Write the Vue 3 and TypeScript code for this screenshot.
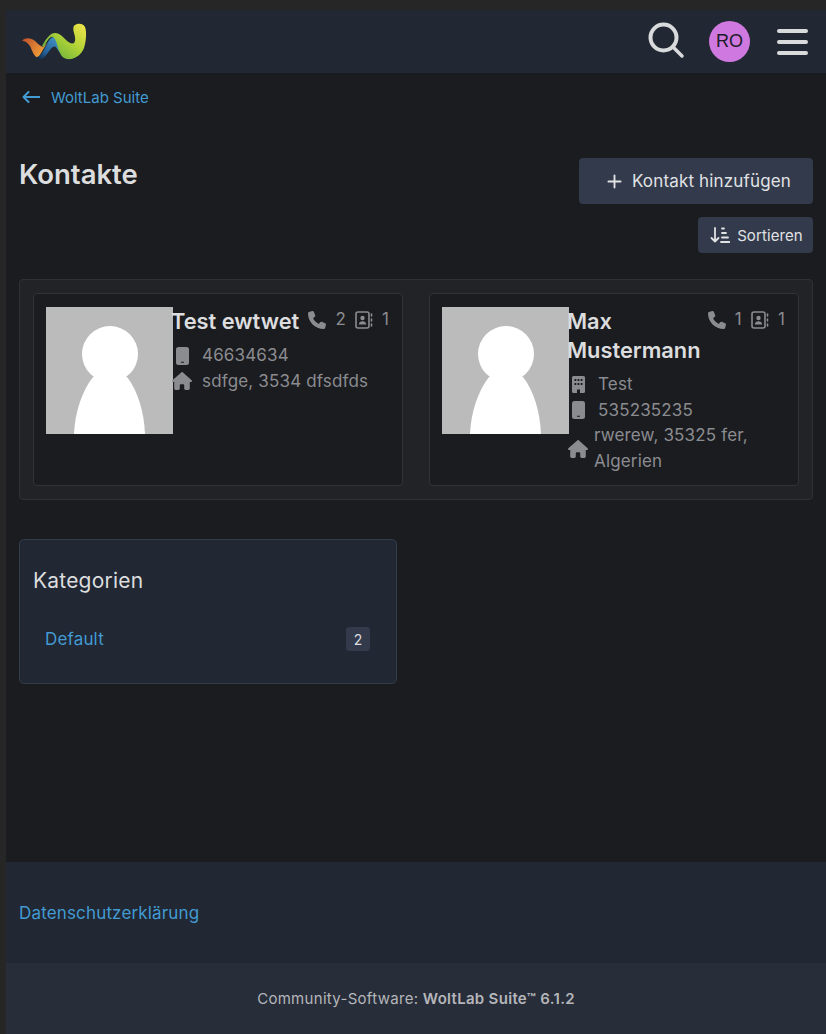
<template>
  <div class="page">
    <header class="topbar">
      <svg class="logo" viewBox="21 23 66 38" width="66" height="38">
        <defs>
          <linearGradient id="lgOrange" x1="0" y1="0" x2="1" y2="0.600">
            <stop offset="0" stop-color="#bd4f2a" />
            <stop offset="1" stop-color="#f2a23a" />
          </linearGradient>
          <linearGradient id="lgBlue" x1="0" y1="1" x2="1" y2="0">
            <stop offset="0" stop-color="#0f1f33" />
            <stop offset="0.35" stop-color="#24639c" />
            <stop offset="1" stop-color="#4a9ccf" />
          </linearGradient>
          <linearGradient id="lgGreen" x1="0" y1="1" x2="1" y2="0">
            <stop offset="0" stop-color="#4fa644" />
            <stop offset="0.55" stop-color="#aed136" />
            <stop offset="1" stop-color="#f5e64c" />
          </linearGradient>
        </defs>
        <path d="M22 40.500C26 37 31 38 35 41C38 44 40 46 43 47L47 43L38 58C34 57 32 50 30 46C28 43 25 41 22 40.500Z" fill="url(#lgOrange)" />
        <path d="M36 57C41 57 44 50 47 44C49 40 51 37 54 37C57 37 59 42 60 47L62 55C60 53 58 50 56.500 48C55 46 54 46.500 53 47C50 48 47 56 42 59C40 60 38 59 36 57Z" fill="url(#lgBlue)" />
        <path d="M42 46C46 39 50 33 55 33C60 33 63 37 66 40C69 43 72 44 74 43C76 41 75 36 74 33C73 29 73 26 75 25C78 23 83 23 85 27C87 32 86 42 84 48C81 56 73 60 67 59C62 58 60 54 58 48C57 43 55 38 53 37C50 36 47 41 44 47Z" fill="url(#lgGreen)" />
      </svg>
      <div class="topbar-actions">
        <svg class="search" viewBox="0 0 38 38" width="38" height="38">
          <circle cx="15.500" cy="15.500" r="13" fill="none" stroke="#d9dadc" stroke-width="4" />
          <path d="M25 25L34 34" stroke="#d9dadc" stroke-width="3.500" stroke-linecap="round" />
        </svg>
        <div class="user">RO</div>
        <div class="burger"><span></span><span></span><span></span></div>
      </div>
    </header>

    <main class="content">
      <nav class="crumb">
        <svg viewBox="0 0 18 12" width="18" height="12">
          <path d="M1.500 6H17.500M6.500 1L1.500 6L6.500 11" fill="none" stroke="currentColor" stroke-width="2" stroke-linecap="round" stroke-linejoin="round" />
        </svg>
        <a>WoltLab Suite</a>
      </nav>

      <div class="heading">
        <h1>Kontakte</h1>
        <div class="actions">
          <button class="btn btn-large">
            <svg viewBox="0 0 16 16" width="15" height="15">
              <path d="M8 1.500V14.500M1.500 8H14.500" stroke="currentColor" stroke-width="2" stroke-linecap="round" />
            </svg>
            Kontakt hinzufügen
          </button>
          <button class="btn btn-small">
            <svg viewBox="0 0 20 18" width="20" height="18">
              <path d="M5 2V15.500M1.500 12L5 15.500L8.500 12" fill="none" stroke="currentColor" stroke-width="1.800" stroke-linecap="round" stroke-linejoin="round" />
              <path d="M12 2.500H14M12 7H16M12 11.500H18M11 16H19.500" fill="none" stroke="currentColor" stroke-width="1.800" stroke-linecap="round" />
            </svg>
            Sortieren
          </button>
        </div>
      </div>

      <section class="contacts">
        <article v-for="c in contacts" :key="c.name" class="card">
          <svg class="avatar" viewBox="0 0 127 127" width="127" height="127">
            <rect width="127" height="127" fill="#bbbbbb" />
            <circle cx="64" cy="47" r="28" fill="#fff" />
            <path d="M28 127C29 105 36 84 47 70H81C92 84 98 105 99 127Z" fill="#fff" />
          </svg>
          <div class="info">
            <div class="title-row">
              <h2>{{ c.name }}</h2>
              <div class="counts">
                <svg viewBox="0 0 512 512" width="18" height="18">
                  <path fill="currentColor" d="M164.900 24.600c-7.700-18.600-28-28.500-47.400-23.200l-88 24C12.100 30.200 0 46 0 64C0 311.400 200.600 512 448 512c18 0 33.800-12.100 38.600-29.500l24-88c5.300-19.400-4.600-39.700-23.200-47.400l-96-40c-16.300-6.800-35.200-2.100-46.300 11.600L304.700 368C234.300 334.700 177.300 277.700 144 207.300L193.300 167c13.700-11.200 18.400-30 11.600-46.300l-40-96z" />
                </svg>
                <span class="num">{{ c.phones }}</span>
                <svg viewBox="0 0 18 18" width="18" height="18">
                  <rect x="1" y="1" width="13" height="16" rx="2" fill="none" stroke="currentColor" stroke-width="1.600" />
                  <circle cx="7.500" cy="7" r="2.200" fill="currentColor" />
                  <path d="M3.800 13.500C4 11 5.500 10.300 7.500 10.300C9.500 10.300 11 11 11.200 13.500Z" fill="currentColor" />
                  <path d="M16.500 3V5M16.500 8V10M16.500 13V15" stroke="currentColor" stroke-width="1.600" stroke-linecap="round" />
                </svg>
                <span class="num">{{ c.books }}</span>
              </div>
            </div>
            <div v-for="row in c.rows" :key="row.text" class="row" :class="{ 'row-wrap': row.wrap }">
              <span class="ico">
                <svg v-if="row.icon === 'mobile'" viewBox="0 0 13 18" width="13" height="18">
                  <path fill="currentColor" fill-rule="evenodd" d="M2.500 0H10.500A2.500 2.500 0 0 1 13 2.500V15.500A2.500 2.500 0 0 1 10.500 18H2.500A2.500 2.500 0 0 1 0 15.500V2.500A2.500 2.500 0 0 1 2.500 0ZM5 14.800V15.800H8V14.800Z" />
                </svg>
                <svg v-else-if="row.icon === 'building'" viewBox="0 0 13 17" width="13" height="17">
                  <path fill="currentColor" fill-rule="evenodd" d="M1.500 0H11.500A1.500 1.500 0 0 1 13 1.500V15.500A1.500 1.500 0 0 1 11.500 17H8V13.500H5V17H1.500A1.500 1.500 0 0 1 0 15.500V1.500A1.500 1.500 0 0 1 1.500 0ZM2.500 3V5H4.300V3ZM5.600 3V5H7.400V3ZM8.700 3V5H10.500V3ZM2.500 7V9H4.300V7ZM5.600 7V9H7.400V7ZM8.700 7V9H10.500V7Z" />
                </svg>
                <svg v-else class="house" viewBox="0 0 576 512" width="20" height="18">
                  <path fill="currentColor" d="M575.800 255.500c0 18-15 32.100-32 32.100h-32l.7 160.200c0 2.700-.2 5.400-.5 8.100V472c0 22.100-17.900 40-40 40H456c-1.100 0-2.200 0-3.300-.1c-1.400 .1-2.800 .1-4.200 .1H416 392c-22.100 0-40-17.900-40-40V448 384c0-17.700-14.300-32-32-32H256c-17.700 0-32 14.300-32 32v64 24c0 22.100-17.900 40-40 40H160 128.100c-1.500 0-3-.1-4.500-.2c-1.200 .1-2.400 .2-3.600 .2H104c-22.100 0-40-17.900-40-40V360c0-.9 0-1.900 .1-2.800V287.600H32c-18 0-32-14-32-32.100c0-9 3-17 10-24L266.400 8c7-7 15-8 22-8s15 2 21 7L564.800 231.500c8 7 12 15 11 24z" />
                </svg>
              </span>
              <span class="row-text">{{ row.text }}</span>
            </div>
          </div>
        </article>
      </section>

      <aside class="sidebar">
        <h3>Kategorien</h3>
        <div class="cat">
          <a>Default</a>
          <span class="badge">2</span>
        </div>
      </aside>
    </main>

    <footer>
      <div class="foot-links"><a>Datenschutzerklärung</a></div>
      <div class="foot-copy"><span>Community-Software: <b>WoltLab Suite™ 6.1.2</b></span></div>
    </footer>
  </div>
</template>

<script setup lang="ts">
interface ContactRow {
  icon: 'mobile' | 'building' | 'house'
  text: string
  wrap?: boolean
}

interface Contact {
  name: string
  phones: number
  books: number
  rows: ContactRow[]
}

const contacts: Contact[] = [
  {
    name: 'Test ewtwet',
    phones: 2,
    books: 1,
    rows: [
      { icon: 'mobile', text: '46634634' },
      { icon: 'house', text: 'sdfge, 3534 dfsdfds' }
    ]
  },
  {
    name: 'Max Mustermann',
    phones: 1,
    books: 1,
    rows: [
      { icon: 'building', text: 'Test' },
      { icon: 'mobile', text: '535235235' },
      { icon: 'house', text: 'rwerew, 35325 fer, Algerien', wrap: true }
    ]
  }
]
</script>

<style>
html,
body {
  margin: 0;
  background: #262626;
}
</style>

<style scoped>
.page {
  box-sizing: border-box;
  height: 1034px;
  padding: 10px 0 0 6px;
  overflow: hidden;
  font-family: Inter, "Liberation Sans", sans-serif;
  color: #dcddde;
}

.topbar {
  display: flex;
  align-items: center;
  height: 63px;
  padding: 0 18px 0 15px;
  background: #212733;
}

.logo {
  display: block;
  margin-top: 1px;
}

.topbar-actions {
  display: flex;
  align-items: center;
  margin-left: auto;
}

.search {
  display: block;
  margin-top: -1px;
}

.user {
  display: flex;
  align-items: center;
  justify-content: center;
  width: 41px;
  height: 41px;
  margin: 0 27px 0 23px;
  border-radius: 50%;
  background: #cf78e0;
  color: #1b1c26;
  font-family: "Liberation Sans", sans-serif;
  font-size: 18px;
}

.burger {
  display: flex;
  flex-direction: column;
  gap: 7px;
  width: 31px;
}

.burger span {
  height: 4px;
  border-radius: 2px;
  background: #d9dadc;
}

.content {
  height: 789px;
  padding: 0 13px;
  background: #1b1c20;
}

.crumb {
  display: flex;
  align-items: center;
  gap: 11px;
  height: 24px;
  padding: 12px 0 0 3px;
  color: #429bd2;
  font-size: 15px;
}

.heading {
  display: flex;
  justify-content: space-between;
  margin-top: 49px;
}

h1 {
  margin: 0;
  font-size: 27.500px;
  font-weight: 600;
  line-height: 32px;
}

.actions {
  display: flex;
  flex-direction: column;
  align-items: flex-end;
  gap: 13px;
}

.btn {
  display: flex;
  align-items: center;
  justify-content: center;
  border: 0;
  border-radius: 4px;
  background: #323a4c;
  color: #e1e2e4;
  font-family: inherit;
}

.btn-large {
  gap: 10px;
  width: 234px;
  height: 46px;
  padding: 0 0 0 6px;
  font-size: 17px;
  letter-spacing: 0.16px;
}

.btn-small {
  gap: 7px;
  width: 115px;
  height: 36px;
  padding: 0 0 0 2px;
  font-size: 15px;
  letter-spacing: 0.1px;
}

.contacts {
  display: grid;
  grid-template-columns: 370px 370px;
  gap: 26px;
  height: 193px;
  margin-top: 26px;
  padding: 13px;
  border: 1px solid #303136;
  border-radius: 4px;
  background: #222327;
}

.card {
  display: flex;
  padding: 13px 13px 11px 12px;
  border: 1px solid #323337;
  border-radius: 4px;
  background: #1b1c20;
}

.avatar {
  display: block;
  flex: none;
}

.info {
  flex: 1;
  min-width: 0;
  margin-left: -1px;
  color: #8b8c90;
  font-size: 17px;
  letter-spacing: 0.16px;
  line-height: 25.500px;
}

.title-row {
  display: flex;
  justify-content: space-between;
  gap: 6px;
  margin-bottom: 7px;
}

h2 {
  margin: 0 0 0 -1px;
  color: #dcddde;
  font-size: 21.800px;
  font-weight: 600;
  letter-spacing: 0;
  line-height: 29px;
}

.counts {
  display: flex;
  flex: none;
  align-items: center;
  align-self: flex-start;
  gap: 9px;
  height: 25px;
}

.counts svg {
  display: block;
}

.row {
  display: flex;
  align-items: center;
}

.ico {
  display: flex;
  flex: none;
  justify-content: center;
  width: 20px;
  margin-right: 10px;
}

.row-wrap .ico {
  margin-right: 6px;
}

.ico svg {
  display: block;
}

.sidebar {
  box-sizing: border-box;
  width: 378px;
  height: 145px;
  margin-top: 39px;
  padding: 27px 13px 0;
  border: 1px solid #353c4b;
  border-radius: 5px;
  background: #212733;
}

h3 {
  margin: 0;
  font-size: 21px;
  font-weight: 400;
  letter-spacing: 0.2px;
  line-height: 28px;
}

.cat {
  display: flex;
  align-items: center;
  justify-content: space-between;
  margin-top: 32px;
  padding: 0 13px 0 12px;
  font-size: 17px;
  letter-spacing: 0.16px;
}

.cat a {
  color: #429bd2;
}

.badge {
  display: flex;
  align-items: center;
  justify-content: center;
  width: 24px;
  height: 24px;
  border-radius: 3px;
  background: #323a4c;
  font-size: 14px;
}

.foot-links {
  display: flex;
  align-items: center;
  height: 101px;
  padding-left: 13px;
  background: #212733;
  color: #429bd2;
  font-size: 17px;
  letter-spacing: 0.16px;
}

.foot-copy {
  display: flex;
  align-items: center;
  justify-content: center;
  height: 71px;
  background: #272d39;
  color: #b5b6ba;
  font-size: 15px;
  letter-spacing: 0.3px;
}

.foot-copy b {
  font-weight: 600;
}
</style>
